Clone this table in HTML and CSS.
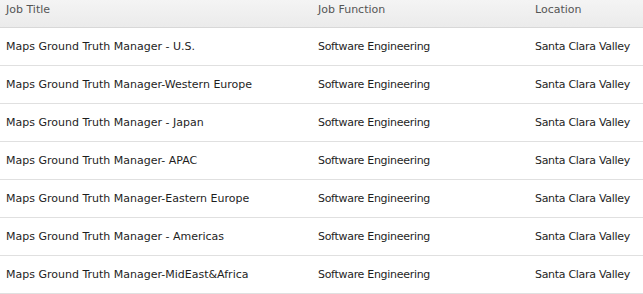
FILE: index.html
```html
<!DOCTYPE html>
<html lang="en">

<head>
    <title>Job Listings</title>
    <link rel="stylesheet" href="styles.css">
</head>

<body>
    <table class="jobs">
        <thead>
            <tr>
                <th class="col-title">Job Title</th>
                <th class="col-function">Job Function</th>
                <th class="col-location">Location</th>
            </tr>
        </thead>
        <tbody>
            <tr>
                <td>Maps Ground Truth Manager - U.S.</td>
                <td>Software Engineering</td>
                <td>Santa Clara Valley</td>
            </tr>
            <tr>
                <td>Maps Ground Truth Manager-Western Europe</td>
                <td>Software Engineering</td>
                <td>Santa Clara Valley</td>
            </tr>
            <tr>
                <td>Maps Ground Truth Manager - Japan</td>
                <td>Software Engineering</td>
                <td>Santa Clara Valley</td>
            </tr>
            <tr>
                <td>Maps Ground Truth Manager- APAC</td>
                <td>Software Engineering</td>
                <td>Santa Clara Valley</td>
            </tr>
            <tr>
                <td>Maps Ground Truth Manager-Eastern Europe</td>
                <td>Software Engineering</td>
                <td>Santa Clara Valley</td>
            </tr>
            <tr>
                <td>Maps Ground Truth Manager - Americas</td>
                <td>Software Engineering</td>
                <td>Santa Clara Valley</td>
            </tr>
            <tr>
                <td>Maps Ground Truth Manager-MidEast&amp;Africa</td>
                <td>Software Engineering</td>
                <td>Santa Clara Valley</td>
            </tr>
        </tbody>
    </table>
</body>

</html>
```

FILE: styles.css
```css
body {
    margin: 0;
    background: #fff;
    font-family: 'DejaVu Sans', sans-serif;
    font-size: 11px;
    color: #1e1e1e;
}

.jobs {
    width: 643px;
    border-collapse: collapse;
    table-layout: fixed;
}

.jobs th {
    height: 27px;
    padding: 0 6px;
    text-align: left;
    font-weight: normal;
    color: #555;
    vertical-align: top;
    line-height: 19px;
    background: linear-gradient(#f4f4f4, #ebebeb);
    border-bottom: 1px solid #d8d8d8;
}

.col-title {
    width: 300px;
}

.col-function {
    width: 205px;
}

.jobs td {
    height: 37px;
    padding: 0 6px;
    border-bottom: 1px solid #e0e0e0;
    white-space: nowrap;
}

.jobs td + td {
    letter-spacing: -0.3px;
}
```
